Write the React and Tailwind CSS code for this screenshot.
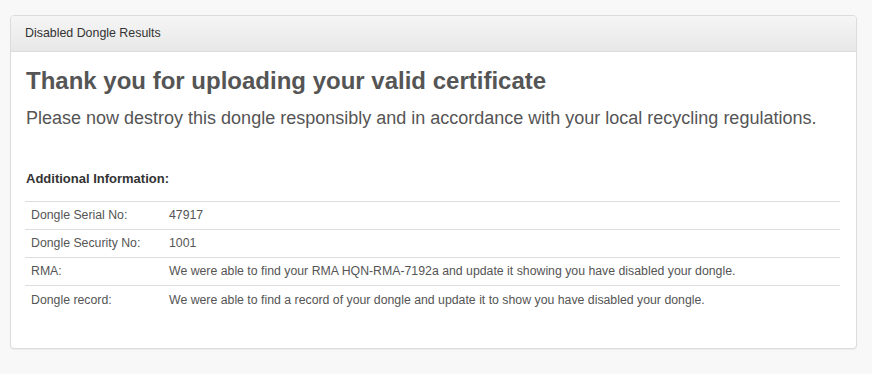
import React from 'react';

const rows = [
  ['Dongle Serial No:', '47917'],
  ['Dongle Security No:', '1001'],
  ['RMA:', 'We were able to find your RMA HQN-RMA-7192a and update it showing you have disabled your dongle.'],
  ['Dongle record:', 'We were able to find a record of your dongle and update it to show you have disabled your dongle.'],
];

export default function App() {
  return (
    <div
      className="w-[872px] h-[374px] bg-[#f8f8f8] pt-[15px] pl-[10px] pr-[15px]"
      style={{ fontFamily: '"Liberation Sans", Arial, sans-serif' }}
    >
      <div className="h-[334px] bg-white border border-[#dcdcdc] rounded-[4px] shadow-[0_1px_1px_rgba(0,0,0,0.05)] overflow-hidden">
        <div className="h-[36px] flex items-center px-[14px] bg-gradient-to-b from-[#f5f5f5] to-[#e8e8e8] border-b border-[#dcdcdc] text-[12.4px] text-[#333]">
          Disabled Dongle Results
        </div>
        <div className="px-[15px] pt-[14px]">
          <h1 className="text-[24px] font-bold text-[#555] leading-[30px]">
            Thank you for uploading your valid certificate
          </h1>
          <p className="mt-[10px] text-[18px] text-[#555] leading-[24px]">
            Please now destroy this dongle responsibly and in accordance with your local recycling regulations.
          </p>
          <h4 className="mt-[40px] text-[13px] font-bold text-[#333] leading-[18px]">Additional Information:</h4>
          <table className="mt-[13px] -ml-[1px] w-[815px] text-[12.3px] text-[#555] border-collapse">
            <tbody>
              {rows.map(([k, v]) => (
                <tr key={k} className="border-t border-[#ddd] h-[28px]">
                  <td className="w-[144px] px-[6px] align-middle">{k}</td>
                  <td className="px-0 align-middle">{v}</td>
                </tr>
              ))}
            </tbody>
          </table>
        </div>
      </div>
    </div>
  );
}
